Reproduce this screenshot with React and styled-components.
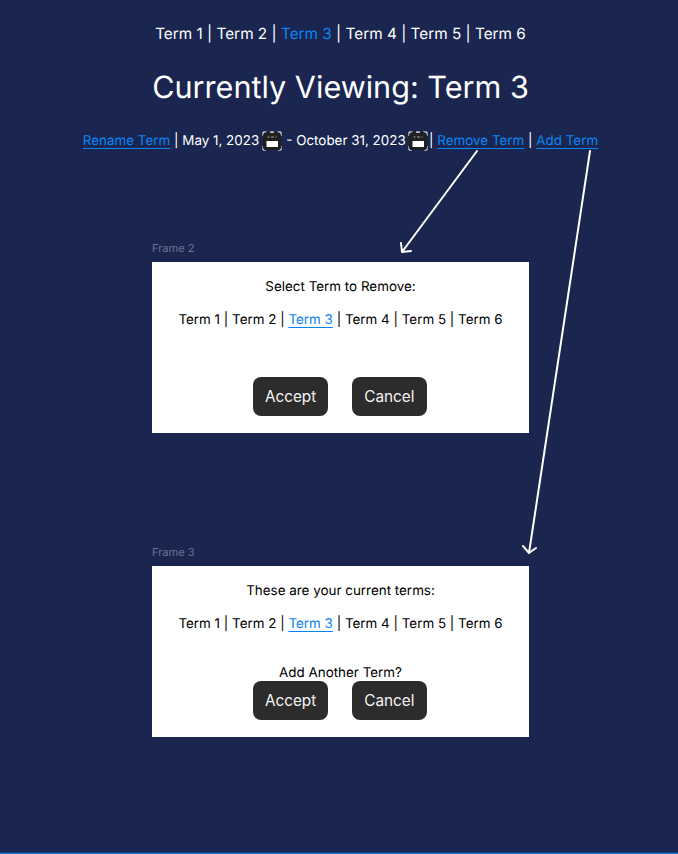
import React from 'react';
import styled, { createGlobalStyle } from 'styled-components';

const Global = createGlobalStyle`
  body { margin: 0; background: #1a264f; font-family: Inter, sans-serif; }
`;
const Board = styled.main`
  position: relative; box-sizing: border-box; width: 678px; height: 854px; padding-left: 3px;
  background: #1a264f; color: #fff; border-bottom: 1px solid #1f7acb; overflow: hidden;
  box-shadow: inset 0 -1px #0c4482;
  display: flex; flex-direction: column; align-items: center;
  text-rendering: geometricPrecision;
`;
const Terms = styled.nav`
  font-size: ${p => p.$size}px; line-height: 20px; white-space: pre;
  margin-top: ${p => p.$top}px;
`;
const Link = styled.a`
  color: #0b84f3; text-decoration: ${p => (p.$plain ? 'none' : 'underline 1px')};
  text-underline-offset: 3px; text-decoration-skip-ink: none;
`;
const Title = styled.h1`
  margin: 24px 0 0; font-weight: 400; font-size: 30.6px; line-height: 40px; white-space: nowrap;
`;
const Toolbar = styled.div`
  display: flex; align-items: center; margin-top: 23px; height: 20px; font-size: 13.42px; white-space: pre;
`;
const Calendar = styled.svg`
  display: block; flex: none; width: 20px; height: 20px; margin: 0 1px 0 2.3px;
`;
const Frame = styled.section`
  width: 377px; margin-top: ${p => p.$top}px;
`;
const FrameLabel = styled.div`
  font-size: 11px; line-height: 14px; color: #6f7594; height: 21px;
`;
const Dialog = styled.div`
  box-sizing: border-box; height: 171px; background: #fff; color: #000;
  padding-top: 15px; display: flex; flex-direction: column; align-items: center;
  font-size: 13.42px; line-height: 20px;
`;
const Prompt = styled.div`height: 20px; margin-top: 29px;`;
const Actions = styled.div`display: flex; gap: 24px; margin: -1.6px 1.6px 0 0;`;
const Button = styled.button`
  width: ${p => p.$width}px; height: 38.4px; padding: 1px 0 0; border: 0; border-radius: 8px;
  background: #2c2c2c; color: #f5f5f5; font: 400 15.3px/38px Inter, sans-serif;
`;
const Arrows = styled.svg`position: absolute; inset: 0; pointer-events: none;`;

const TermList = ({ size, top, underlined }) => (
  <Terms $size={size} $top={top}>
    {'Term 1 | Term 2 | '}<Link $plain={!underlined}>Term 3</Link>{' | Term 4 | Term 5 | Term 6'}
  </Terms>
);
const CalendarIcon = () => (
  <Calendar viewBox="0 0 20 20">
    <path d="M1 5V1h4M8 1h4M15 1h4v4M1 15v4h3M16 19h3v-4" fill="none" stroke="#fff" />
    <path d="M3 2l2-1.5h2L8 2h4l1-1.5h2L17 2l2 2v13l-1.5 2h-15L1 17V4z" fill="#202020" />
    <path d="M8 1.5h4M5.5 6h2M9 6h3M13.5 6h1" stroke="#c5c5c5" strokeWidth=".8" />
    <path d="M4.5 10H16v6H4.5z" fill="#fff" />
  </Calendar>
);
const TermDialog = ({ label, heading, prompt, top }) => (
  <Frame $top={top}>
    <FrameLabel>{label}</FrameLabel>
    <Dialog>
      <div>{heading}</div>
      <TermList size={13.42} top={13} underlined />
      <Prompt>{prompt}</Prompt>
      <Actions><Button $width={75.3}>Accept</Button><Button $width={74.3}>Cancel</Button></Actions>
    </Dialog>
  </Frame>
);

export default function App() {
  return (
    <><Global />
      <Board>
        <TermList size={15.33} top={24} />
        <Title>Currently Viewing: Term 3</Title>
        <Toolbar>
          <Link>Rename Term</Link>{' | May 1, 2023'}<CalendarIcon />{' - October 31, 2023'}<CalendarIcon />{'| '}
          <Link>Remove Term</Link>{' | '}<Link>Add Term</Link>
        </Toolbar>
        <TermDialog top={90} label="Frame 2" heading="Select Term to Remove:" />
        <TermDialog top={112} label="Frame 3" heading="These are your current terms:" prompt="Add Another Term?" />
        <Arrows width="678" height="854" fill="none" stroke="#fff" strokeWidth="2" strokeLinecap="round" strokeLinejoin="round">
          <path d="M477 151L402 252M401 243L402 252L411 251" />
          <path d="M590 151L529 553M523 546L529 553L536 548" />
        </Arrows>
      </Board>
    </>
  );
}
